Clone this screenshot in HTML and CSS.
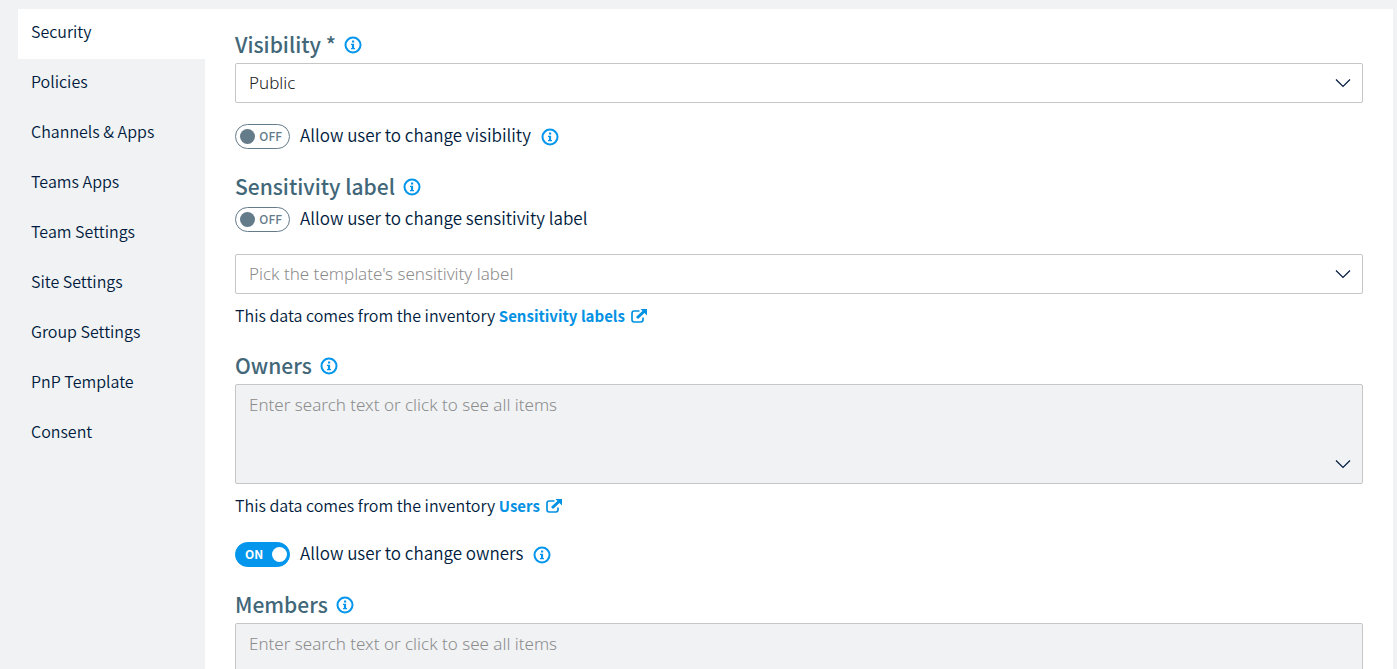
FILE: index.html
```
<!DOCTYPE html>
<html lang="en">
	<head>
		<meta charset="UTF-8">
		<title>Security</title>
		<link rel="stylesheet" href="styles.css">
	</head>
	<body>
		<!-- shared icons -->
		<svg class="sprite" aria-hidden="true">
			<symbol id="ico-info" viewBox="0 0 18 18">
				<circle cx="9" cy="9" r="7.5" fill="none" stroke="currentColor" stroke-width="2"/>
				<path d="M8 4.600h2.200v1.900H8zM7 7.800h3.100v4.200h.9v1.300H7V12h.9V9.100H7z" fill="currentColor"/>
			</symbol>
			<symbol id="ico-chevron" viewBox="0 0 16 10">
				<path d="M1 1.500l7 7 7-7" fill="none" stroke="currentColor" stroke-width="1.200"/>
			</symbol>
			<symbol id="ico-link" viewBox="0 0 16 14">
				<path d="M8.500 2H3.200Q1 2 1 4.200v6.600Q1 13 3.200 13h6.600Q12 13 12 10.800V8.500" fill="none" stroke="currentColor" stroke-width="1.700"/>
				<path d="M6 9l7-6.500" fill="none" stroke="currentColor" stroke-width="3"/>
				<path d="M9.500 0H16v6.500z" fill="currentColor"/>
			</symbol>
		</svg>
		<div class="page">
			<nav class="tabs">
				<a class="tab active" href="#security">Security</a>
				<a class="tab" href="#policies">Policies</a>
				<a class="tab" href="#channels">Channels &amp; Apps</a>
				<a class="tab" href="#teams-apps">Teams Apps</a>
				<a class="tab" href="#team-settings">Team Settings</a>
				<a class="tab" href="#site-settings">Site Settings</a>
				<a class="tab" href="#group-settings">Group Settings</a>
				<a class="tab" href="#pnp">PnP Template</a>
				<a class="tab" href="#consent">Consent</a>
			</nav>
			<form class="panel" id="security">
				<section class="group">
					<div class="title">
						<label for="visibility">Visibility *</label>
						<button class="info" type="button" aria-label="About visibility"><svg><use href="#ico-info"/></svg></button>
					</div>
					<div class="field">
						<select class="control" id="visibility">
							<option selected>Public</option>
							<option>Private</option>
						</select>
						<svg class="chevron"><use href="#ico-chevron"/></svg>
					</div>
					<div class="toggle">
						<label class="toggle-label">
							<input type="checkbox">
							<span class="switch"><span class="off">OFF</span><span class="on">ON</span></span>
							Allow user to change visibility
						</label>
						<button class="info" type="button" aria-label="About changing visibility"><svg><use href="#ico-info"/></svg></button>
					</div>
				</section>
				<section class="group">
					<div class="title">
						<label for="sensitivity">Sensitivity label</label>
						<button class="info" type="button" aria-label="About sensitivity label"><svg><use href="#ico-info"/></svg></button>
					</div>
					<div class="toggle first">
						<label class="toggle-label">
							<input type="checkbox">
							<span class="switch"><span class="off">OFF</span><span class="on">ON</span></span>
							Allow user to change sensitivity label
						</label>
					</div>
					<div class="field spaced">
						<select class="control" id="sensitivity" required>
							<option value="" selected>Pick the template's sensitivity label</option>
						</select>
						<svg class="chevron"><use href="#ico-chevron"/></svg>
					</div>
					<p class="hint">This data comes from the inventory <a href="#labels">Sensitivity labels<svg><use href="#ico-link"/></svg></a></p>
				</section>
				<section class="group">
					<div class="title">
						<label for="owners">Owners</label>
						<button class="info" type="button" aria-label="About owners"><svg><use href="#ico-info"/></svg></button>
					</div>
					<div class="field">
						<textarea class="control multi" id="owners" placeholder="Enter search text or click to see all items"></textarea>
						<svg class="chevron"><use href="#ico-chevron"/></svg>
					</div>
					<p class="hint">This data comes from the inventory <a href="#users">Users<svg><use href="#ico-link"/></svg></a></p>
					<div class="toggle">
						<label class="toggle-label">
							<input type="checkbox" checked>
							<span class="switch"><span class="off">OFF</span><span class="on">ON</span></span>
							Allow user to change owners
						</label>
						<button class="info" type="button" aria-label="About changing owners"><svg><use href="#ico-info"/></svg></button>
					</div>
				</section>
				<section class="group">
					<div class="title">
						<label for="members">Members</label>
						<button class="info" type="button" aria-label="About members"><svg><use href="#ico-info"/></svg></button>
					</div>
					<div class="field">
						<textarea class="control multi" id="members" placeholder="Enter search text or click to see all items"></textarea>
						<svg class="chevron"><use href="#ico-chevron"/></svg>
					</div>
				</section>
			</form>
		</div>
	</body>
</html>
```
FILE: styles.css
```
*{
	box-sizing: border-box;
}
body{
	margin: 0;
	background: #f0f2f4;
	color: #001b3d;
	font: 350 16px/24px "Noto Sans CJK SC", sans-serif;
}
.sprite{
	display: none;
}
.page{
	display: flex;
	min-height: 100vh;
	padding: 9px 4px 0 18px;
}
.tabs{
	flex: 0 0 187px;
}
.tab{
	display: block;
	padding: 10px 13px 16px;
	color: inherit;
	text-decoration: none;
}
.tab.active{
	background: #fff;
}
.panel{
	flex: 1;
	padding: 18px 30px;
	background: #fff;
}
.group{
	margin-bottom: 20px;
}
.title{
	display: flex;
	align-items: center;
	gap: 8px;
	color: #426779;
	font-size: 21px;
	font-weight: 500;
	line-height: 34px;
}
.title label{
	padding-bottom: 2px;
}
.info{
	display: block;
	width: 18px;
	height: 18px;
	padding: 0;
	border: 0;
	background: none;
	color: #0396ec;
	cursor: pointer;
}
.info svg{
	display: block;
	width: 18px;
	height: 18px;
}
.field{
	position: relative;
}
.field.spaced{
	margin-top: 22px;
}
.control{
	display: block;
	width: 100%;
	height: 40px;
	padding: 0 13px;
	border: 1px solid #c6c6c6;
	border-radius: 2px;
	background: #fff;
	color: #212121;
	font: 350 17px/24px "Noto Sans", "Open Sans", sans-serif;
	appearance: none;
}
.control:invalid,
.control::placeholder{
	color: #8c8c8c;
	opacity: 1;
}
.control.multi{
	height: 100px;
	padding: 8px 13px;
	background: #f0f2f4;
	resize: none;
}
.chevron{
	position: absolute;
	right: 12px;
	bottom: 15px;
	width: 16px;
	height: 10px;
	color: #001b3d;
	pointer-events: none;
}
.toggle{
	display: flex;
	align-items: center;
	gap: 10px;
	margin-top: 21px;
}
.toggle.first{
	margin-top: 2px;
}
.hint + .toggle{
	margin-top: 24px;
}
.toggle-label{
	display: flex;
	gap: 10px;
	font-size: 17px;
	line-height: 21px;
	cursor: pointer;
}
.toggle-label input{
	position: absolute;
	opacity: 0;
}
.switch{
	display: flex;
	align-items: center;
	justify-content: space-between;
	width: 55px;
	height: 25px;
	padding: 0 7px 0 4px;
	border: 1px solid #647b8a;
	border-radius: 13px;
	color: #647b8a;
	font-size: 12px;
	font-weight: 500;
}
.switch span{
	padding-bottom: 3px;
}
.switch:before{
	content: "";
	width: 15px;
	height: 15px;
	border-radius: 50%;
	background: #647b8a;
}
.on,
input:checked + .switch .off{
	display: none;
}
input:checked + .switch{
	flex-direction: row-reverse;
	padding: 0 2px 0 9px;
	border-color: #0396ec;
	background: #0396ec;
	color: #fff;
	font-weight: 700;
}
input:checked + .switch:before{
	background: #fff;
}
input:checked + .switch .on{
	display: block;
}
input:focus-visible + .switch{
	outline: 2px solid #0396ec;
}
.hint{
	margin: 9px 0 0;
}
.hint a{
	color: #0391e3;
	font-size: 15px;
	font-weight: 700;
	text-decoration: none;
}
.hint svg{
	width: 16px;
	height: 14px;
	margin-left: 6px;
	vertical-align: -1px;
}
```
